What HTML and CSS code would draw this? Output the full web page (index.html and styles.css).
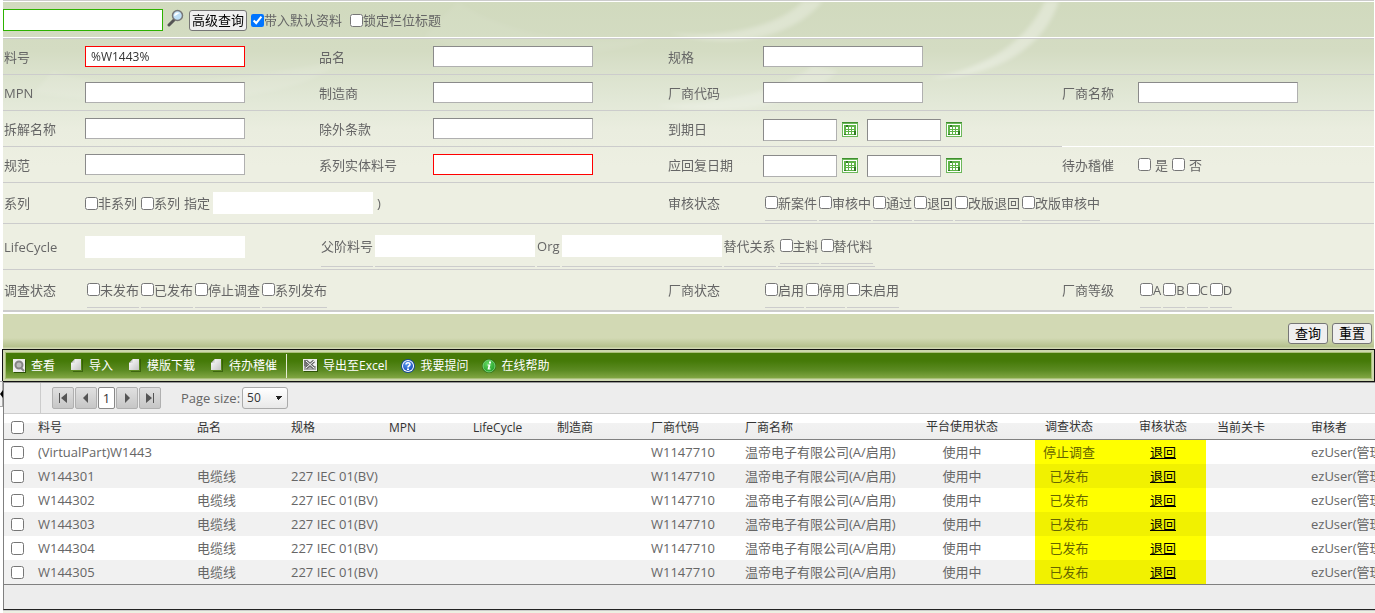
FILE: index.html
```
<!DOCTYPE html>
<html lang="zh-CN">
<head>
<meta charset="utf-8">
<title>料号查询</title>
<link rel="stylesheet" href="styles.css">
</head>
<body>
<svg class="defs" aria-hidden="true">
  <defs>
    <linearGradient id="paper" x1="0" y1="0" x2="1" y2="1"><stop offset="0" stop-color="#fff"/><stop offset="1" stop-color="#c4c4c4"/></linearGradient>
    <radialGradient id="blue" cx=".4" cy=".3" r=".8"><stop offset="0" stop-color="#5b9bf0"/><stop offset="1" stop-color="#1247b8"/></radialGradient>
    <radialGradient id="green" cx=".4" cy=".3" r=".8"><stop offset="0" stop-color="#63d862"/><stop offset="1" stop-color="#1b9a22"/></radialGradient>
    <filter id="soft"><feGaussianBlur stdDeviation="2"/></filter>
    <symbol id="cal" viewBox="0 0 16 15">
      <path fill="#6cb85a" d="M0 0h16v15H0z"/><path fill="#3f8f2f" d="M0 0h16v1H0z"/>
      <path fill="#fff" d="M1 2h14v12H1z"/><path fill="#5fb348" d="M2 3h12v10H2z"/>
      <path fill="#fff" d="M4 5h2v2H4zM7 5h2v2H7zM10 5h2v2h-2zM4 8h2v1H4zM7 8h2v1H7zM10 8h2v1h-2zM4 10h2v2H4zM7 10h2v2H7zM10 10h2v2h-2z"/>
      <path fill="#2f7a22" d="M4 3h2v2H4zM2 12h2v1H2zM12 9h2v4h-2z"/>
    </symbol>
    <symbol id="page" viewBox="0 0 12 14">
      <path fill="#2d5206" d="M5 1h7v13H2v-1h9V1z" opacity=".7"/>
      <path fill="url(#paper)" d="M4 1h6v11H0V5z"/><path fill="#9b9b9b" d="M4 1v4H0z"/><path fill="#ddd" d="M4 1v4H1z"/>
    </symbol>
  </defs>
</svg>

<form class="query">
  <svg class="swoosh" viewBox="0 0 1371 310" preserveAspectRatio="none" aria-hidden="true">
    <g filter="url(#soft)">
      <path d="M820 0C796 30 742 52 665 32C725 38 778 24 800 0z" opacity=".28"/>
      <path d="M1056 0C1043 42 1000 76 925 78C990 66 1026 36 1042 0z" opacity=".32"/>
      <path d="M835 70C800 104 730 118 650 104C720 104 785 88 810 64z" opacity=".2"/>
      <path d="M455 0C485 24 560 48 655 36C590 62 490 62 420 36z" opacity=".06"/>
      <path d="M50 70C100 92 260 78 340 58C300 100 160 112 30 92z" opacity=".1"/>
    </g>
  </svg>

  <div class="top">
    <input class="box green" type="text" aria-label="快速查询">
    <button class="glass" type="button" aria-label="查询">
      <svg width="18" height="18" viewBox="0 0 18 18"><path d="M7 11l-5 5" stroke="#555" stroke-width="3" stroke-linecap="round"/><circle cx="10.500" cy="6.500" r="5" fill="#bfe0f7" stroke="#777" stroke-width="1.500"/><path d="M7 7a4 4 0 0 1 6-3c-2 0-3 3-6 3z" fill="#fff"/></svg>
    </button>
    <button class="btn" type="button">高级查询</button>
    <label class="opt first"><input type="checkbox" checked>带入默认资料</label>
    <label class="opt"><input type="checkbox">锁定栏位标题</label>
  </div>

  <div class="row">
    <label class="cell" for="f1">料号</label><div class="cell"><input class="box red" id="f1" type="text" value="%W1443%"></div>
    <label class="cell" for="f2">品名</label><div class="cell"><input class="box" id="f2" type="text"></div>
    <label class="cell" for="f3">规格</label><div class="cell"><input class="box" id="f3" type="text"></div>
    <div class="cell"></div><div class="cell"></div>
  </div>
  <div class="row">
    <label class="cell" for="f4">MPN</label><div class="cell"><input class="box" id="f4" type="text"></div>
    <label class="cell" for="f5">制造商</label><div class="cell"><input class="box" id="f5" type="text"></div>
    <label class="cell" for="f6">厂商代码</label><div class="cell"><input class="box" id="f6" type="text"></div>
    <label class="cell" for="f7">厂商名称</label><div class="cell"><input class="box" id="f7" type="text"></div>
  </div>
  <div class="row">
    <label class="cell" for="f8">拆解名称</label><div class="cell"><input class="box" id="f8" type="text"></div>
    <label class="cell" for="f9">除外条款</label><div class="cell"><input class="box" id="f9" type="text"></div>
    <label class="cell" for="f10">到期日</label>
    <div class="cell dates"><input class="box" id="f10" type="text"><button class="cal" type="button" aria-label="选择日期"><svg width="16" height="15"><use href="#cal"/></svg></button><input class="box" type="text" aria-label="到期日止"><button class="cal" type="button" aria-label="选择日期"><svg width="16" height="15"><use href="#cal"/></svg></button></div>
    <div class="cell light"></div><div class="cell light"></div>
  </div>
  <div class="row">
    <label class="cell" for="f11">规范</label><div class="cell"><input class="box" id="f11" type="text"></div>
    <label class="cell" for="f12">系列实体料号</label><div class="cell"><input class="box red" id="f12" type="text"></div>
    <label class="cell" for="f13">应回复日期</label>
    <div class="cell dates"><input class="box" id="f13" type="text"><button class="cal" type="button" aria-label="选择日期"><svg width="16" height="15"><use href="#cal"/></svg></button><input class="box" type="text" aria-label="应回复日期止"><button class="cal" type="button" aria-label="选择日期"><svg width="16" height="15"><use href="#cal"/></svg></button></div>
    <span class="cell">待办稽催</span>
    <div class="cell loose"><label><input type="checkbox">是</label><label><input type="checkbox">否</label></div>
  </div>
  <div class="row series">
    <span class="cell">系列</span>
    <div class="cell mid wide3"><label class="opt"><input type="checkbox">非系列</label><label class="opt"><input type="checkbox">系列</label><label for="f14">指定</label><input class="box plain" id="f14" type="text"><span>)</span></div>
    <span class="cell">审核状态</span>
    <div class="cell wide3"><div class="opts">
      <label class="item"><input type="checkbox">新案件</label><label class="item"><input type="checkbox">审核中</label><label class="item"><input type="checkbox">通过</label><label class="item"><input type="checkbox">退回</label><label class="item"><input type="checkbox">改版退回</label><label class="item"><input type="checkbox">改版审核中</label>
    </div></div>
  </div>
  <div class="row life">
    <label class="cell" for="f15">LifeCycle</label><div class="cell"><input class="box plain" id="f15" type="text"></div>
    <div class="cell wide6"><div class="opts outer">
      <label class="item" for="f16">父阶料号</label><div class="item"><input class="box plain" id="f16" type="text"></div>
      <label class="item" for="f17">Org</label><div class="item"><input class="box plain" id="f17" type="text"></div>
      <span class="item">替代关系</span>
      <div class="item"><div class="opts"><label class="item"><input type="checkbox">主料</label><label class="item"><input type="checkbox">替代料</label></div></div>
    </div></div>
  </div>
  <div class="row last">
    <span class="cell">调查状态</span>
    <div class="cell wide3"><div class="opts">
      <label class="item"><input type="checkbox">未发布</label><label class="item"><input type="checkbox">已发布</label><label class="item"><input type="checkbox">停止调查</label><label class="item"><input type="checkbox">系列发布</label>
    </div></div>
    <span class="cell">厂商状态</span>
    <div class="cell"><div class="opts">
      <label class="item"><input type="checkbox">启用</label><label class="item"><input type="checkbox">停用</label><label class="item"><input type="checkbox">未启用</label>
    </div></div>
    <span class="cell">厂商等级</span>
    <div class="cell"><div class="opts">
      <label class="item"><input type="checkbox">A</label><label class="item"><input type="checkbox">B</label><label class="item"><input type="checkbox">C</label><label class="item"><input type="checkbox">D</label>
    </div></div>
  </div>
  <div class="actions"><button class="btn" type="button">查询</button><button class="btn" type="reset">重置</button></div>
</form>

<div class="toolbar">
  <div class="tools">
    <button type="button"><svg width="14" height="16" viewBox="0 0 14 16"><path fill="#2d5206" d="M1 2h12v13H1z"/><path fill="#eee" d="M0 1h12v13H0z"/><circle cx="6" cy="7" r="3.500" fill="#bbb" stroke="#858585" stroke-width="2"/><path d="M8 10l3 3" stroke="#858585" stroke-width="2"/></svg>查看</button>
    <button type="button"><svg width="14" height="16" viewBox="0 0 14 16"><use href="#page" width="12" height="14"/></svg>导入</button>
    <button type="button"><svg width="14" height="16" viewBox="0 0 14 16"><use href="#page" width="12" height="14"/></svg>模版下载</button>
    <button type="button"><svg width="14" height="16" viewBox="0 0 14 16"><use href="#page" width="12" height="14"/></svg>待办稽催</button>
  </div>
  <div class="tools second">
    <button type="button"><svg width="16" height="16" viewBox="0 0 16 16"><path fill="#2d5206" d="M1 2h14v12H1z"/><path fill="#eee" d="M0 1h14v12H0z"/><path fill="#aaa" d="M1 8h12v4H1z"/><path fill="#777" d="M1 2h3v6H1z"/><path d="M3 3l8 7M11 3l-8 7" stroke="#666" stroke-width="3"/><path d="M3 3l8 7M11 3l-8 7" stroke="#fff"/></svg>导出至Excel</button>
    <button type="button"><svg width="16" height="16" viewBox="0 0 16 16"><circle cx="7" cy="8" r="7" fill="#174a9c"/><circle cx="7" cy="8" r="6" fill="#fff"/><circle cx="7" cy="8" r="5" fill="url(#blue)"/><path d="M5 6.500c0-2.500 4-2.500 4 0C9 8 7 7.500 7 9.500" fill="none" stroke="#fff" stroke-width="1.500"/><path fill="#fff" d="M6 10.500h2v1.500H6z"/></svg>我要提问</button>
    <button type="button"><svg width="16" height="16" viewBox="0 0 16 16"><circle cx="7" cy="8" r="7" fill="#246b13"/><circle cx="7" cy="8" r="6" fill="url(#green)" stroke="#7fd47b"/><path fill="#fff" d="M7 3.500h2v2H7zM5.500 6.500h3l-1 4h1v1h-3l1-4h-1z"/></svg>在线帮助</button>
  </div>
</div>

<main class="grid">
  <div class="pager">
    <div class="pages">
      <button type="button" aria-label="第一页"><svg width="12" height="12" viewBox="0 0 12 12"><path d="M2 1h1v10H2zM10 1v10L4 6z"/></svg></button>
      <button type="button" aria-label="上一页"><svg width="12" height="12" viewBox="0 0 12 12"><path d="M8 1v10L3 6z"/></svg></button>
      <button class="now" type="button">1</button>
      <button type="button" aria-label="下一页"><svg width="12" height="12" viewBox="0 0 12 12"><path d="M4 1v10l5-5z"/></svg></button>
      <button type="button" aria-label="最后一页"><svg width="12" height="12" viewBox="0 0 12 12"><path d="M9 1h1v10H9zM2 1v10l6-5z"/></svg></button>
    </div>
    <label for="size">Page size:</label>
    <select id="size"><option>50</option></select>
  </div>
  <div class="scroll">
    <table>
      <colgroup><col class="w27"><col class="w159"><col class="w94"><col class="w98"><col class="w84"><col class="w84"><col class="w94"><col class="w94"><col class="w164"><col class="w120"><col class="w94"><col class="w94"><col class="w94"><col class="w120"></colgroup>
      <thead><tr><th><input type="checkbox" aria-label="全选"></th><th>料号</th><th>品名</th><th>规格</th><th>MPN</th><th>LifeCycle</th><th>制造商</th><th>厂商代码</th><th>厂商名称</th><th class="c">平台使用状态</th><th class="c">调查状态</th><th class="c">审核状态</th><th>当前关卡</th><th>审核者</th></tr></thead>
      <tbody>
        <tr><td><input type="checkbox" aria-label="选择"></td><td>(VirtualPart)W1443</td><td></td><td></td><td></td><td></td><td></td><td>W1147710</td><td>温帝电子有限公司(A/启用)</td><td class="c">使用中</td><td class="c">停止调查</td><td class="c"><a href="#">退回</a></td><td></td><td>ezUser(管理</td></tr>
        <tr><td><input type="checkbox" aria-label="选择"></td><td>W144301</td><td>电缆线</td><td>227 IEC 01(BV)</td><td></td><td></td><td></td><td>W1147710</td><td>温帝电子有限公司(A/启用)</td><td class="c">使用中</td><td class="c">已发布</td><td class="c"><a href="#">退回</a></td><td></td><td>ezUser(管理</td></tr>
        <tr><td><input type="checkbox" aria-label="选择"></td><td>W144302</td><td>电缆线</td><td>227 IEC 01(BV)</td><td></td><td></td><td></td><td>W1147710</td><td>温帝电子有限公司(A/启用)</td><td class="c">使用中</td><td class="c">已发布</td><td class="c"><a href="#">退回</a></td><td></td><td>ezUser(管理</td></tr>
        <tr><td><input type="checkbox" aria-label="选择"></td><td>W144303</td><td>电缆线</td><td>227 IEC 01(BV)</td><td></td><td></td><td></td><td>W1147710</td><td>温帝电子有限公司(A/启用)</td><td class="c">使用中</td><td class="c">已发布</td><td class="c"><a href="#">退回</a></td><td></td><td>ezUser(管理</td></tr>
        <tr><td><input type="checkbox" aria-label="选择"></td><td>W144304</td><td>电缆线</td><td>227 IEC 01(BV)</td><td></td><td></td><td></td><td>W1147710</td><td>温帝电子有限公司(A/启用)</td><td class="c">使用中</td><td class="c">已发布</td><td class="c"><a href="#">退回</a></td><td></td><td>ezUser(管理</td></tr>
        <tr><td><input type="checkbox" aria-label="选择"></td><td>W144305</td><td>电缆线</td><td>227 IEC 01(BV)</td><td></td><td></td><td></td><td>W1147710</td><td>温帝电子有限公司(A/启用)</td><td class="c">使用中</td><td class="c">已发布</td><td class="c"><a href="#">退回</a></td><td></td><td>ezUser(管理</td></tr>
      </tbody>
    </table>
    <div class="marker"></div>
  </div>
  <div class="foot"></div>
</main>
<div class="under"></div>
<button class="splitter" type="button" aria-label="展开"></button>
</body>
</html>
```
FILE: styles.css
```
* { box-sizing: border-box; }
body {
  margin: 0;
  position: relative;
  padding-left: 3px;
  overflow: hidden;
  background: #fff;
  color: #666;
  font: 13px/18px "Open Sans", "Noto Sans CJK SC", sans-serif;
}
button, input, select { font: inherit; margin: 0; }
input[type="checkbox"] { width: 13px; height: 13px; margin: 0; flex: none; }
.defs { position: absolute; width: 0; height: 0; }

.query {
  position: relative;
  margin-right: 1px;
  border-top: 1px solid #ccc;
  background: linear-gradient(#d1dabe 2px, #d4dcc3 50px, #dbe2cd 72px, #e2e8d7 100px, #eaeddf 128px, #edefe2 165px);
}
.swoosh { position: absolute; left: 0; top: 0; width: 100%; height: 310px; fill: #fff; }
.top, .row, .actions { position: relative; }
.top {
  display: flex;
  align-items: center;
  height: 38px;
  border-top: 1px solid #fff;
  border-bottom: 1px solid #ccc;
  box-shadow: inset 0 -1px #fff;
}
.box {
  width: 160px;
  height: 21px;
  padding: 0 5px;
  border: 1px solid #b0b0b0;
  border-top-color: #8a8a8a;
  border-left-color: #8a8a8a;
  background: #fff;
  color: #333;
  font-size: 12px;
}
.box.red { border-color: #f00; }
.box.green { height: 22px; border-color: #2db200; }
.box.plain { height: 22px; border-color: #fff; }
.glass { width: 18px; height: 24px; margin: 0 4px; padding: 0 0 4px; border: 0; background: none; }
.glass svg { display: block; }
.btn {
  padding: 0 1px;
  border: 1px solid #767676;
  border-radius: 3px;
  background: #efefef;
  color: #000;
  line-height: 19px;
}
.top .btn { padding: 0 2px; }
.opt { display: flex; align-items: center; margin-right: 4px; }
.top .opt { margin-right: 8px; }
.top .first { margin-left: 4px; }

.row {
  display: grid;
  grid-template-columns: 82px minmax(0, 234fr) 114px minmax(0, 235fr) 95px minmax(0, 299fr) 76px minmax(0, 236fr);
  min-height: 36px;
}
.cell {
  display: flex;
  align-items: center;
  border-bottom: 1px solid #ccc;
  white-space: nowrap;
}
.cell:first-child { padding-left: 1px; }
.cell.light { border-color: #fff; }
.wide3 { grid-column: span 3; }
.wide6 { grid-column: span 6; }
.dates { padding-top: 2px; }
.dates .box { width: 74px; height: 22px; }
.cal { width: 16px; height: 15px; margin: 0 9px 0 5px; padding: 0; border: 0; background: none; }
.cal svg { display: block; }
.loose label { display: flex; align-items: center; gap: 4px; margin-right: 4px; }
.series { min-height: 41px; }
.series .plain { margin: 0 4px 0 3px; }
.life { min-height: 46px; }
.last { min-height: 42px; }
.last .cell { border-bottom-width: 2px; }
.opts { display: flex; gap: 2px; padding: 0 2px; }
.item {
  display: flex;
  align-items: center;
  height: 35px;
  border-bottom: 1px solid #ccc;
}
.outer > .item { height: 41px; }

.actions {
  display: flex;
  justify-content: flex-end;
  align-items: center;
  gap: 4px;
  height: 37px;
  padding: 3px 2px 0 0;
  border-top: 2px solid #fff;
  background: linear-gradient(#d2d9b4 24px, #b4c18c 33px, #d2d9b4 34px);
}
.actions .btn { padding: 0 6px; }

.toolbar {
  display: flex;
  align-items: center;
  height: 33px;
  margin-left: -1px;
  padding: 0 10px;
  border: 1px solid #111;
  box-shadow: inset 0 0 0 2px #cdd8ae, inset 0 0 0 3px #a9c078;
  background: linear-gradient(#457a08 35%, #5b8a22 65%, #8fb050);
}
.tools { display: flex; align-items: center; gap: 16px; height: 24px; padding-right: 9px; }
.second { padding-left: 16px; border-left: 1px solid #e4ebd4; gap: 13px; }
.tools button {
  display: flex;
  align-items: center;
  gap: 4px;
  padding: 0;
  border: 0;
  background: none;
  color: #fff;
  font-size: 12px;
  white-space: nowrap;
}
.tools svg { flex: none; }

.grid { border-left: 1px solid #808080; border-bottom: 1px solid #222; }
.pager {
  display: flex;
  align-items: center;
  height: 32px;
  border-top: 1px solid #999;
  border-bottom: 1px solid #ccc;
  background: #ededed;
}
.pages { display: flex; align-items: center; gap: 1px; height: 100%; margin: 0 20px 0 36px; padding-left: 11px; border-left: 1px solid #ccc; }
.pages button {
  display: flex;
  align-items: center;
  justify-content: center;
  width: 22px;
  height: 22px;
  padding: 0;
  border: 1px solid #b0b0b0;
  border-radius: 2px;
  background: linear-gradient(#e0e0e0, #c6c6c6);
}
.pages svg { fill: #555; }
.pages .now { width: 17px; border-color: #888; background: #fff; color: #333; }
.pager select {
  width: 46px;
  height: 22px;
  margin-left: 2px;
  padding: 0 4px;
  appearance: none;
  border: 1px solid #aaa;
  border-radius: 3px;
  background:
    linear-gradient(45deg, transparent 50%, #222 50%) 32px 8px / 4px 4px no-repeat,
    linear-gradient(-45deg, transparent 50%, #222 50%) 36px 8px / 4px 4px no-repeat,
    linear-gradient(#fff, #e8e8e8);
  color: #333;
  font-size: 12px;
}
.scroll { position: relative; overflow: hidden; }
table { width: 1420px; table-layout: fixed; border-collapse: separate; border-spacing: 0; }
th, td { height: 24px; padding: 0 0 0 7px; text-align: left; font-weight: 400; white-space: nowrap; }
.c { padding: 0; text-align: center; }
th {
  height: 26px;
  padding-top: 2px;
  border-bottom: 1px solid #808080;
  background: linear-gradient(#fff 9px, #f2f2f2 9px, #ededed);
  color: #333;
  font-size: 12px;
}
td { background: #fff; }
tr:nth-child(even) td { background: #f1f1f1; }
td input, th input { display: block; }
td a { color: #000; }
.w27 { width: 27px; }
.w84 { width: 84px; }
.w94 { width: 94px; }
.w98 { width: 98px; }
.w120 { width: 120px; }
.w159 { width: 159px; }
.w164 { width: 164px; }
.marker {
  position: absolute;
  left: 1031px;
  top: 26px;
  bottom: 0;
  width: 171px;
  background: #ff0;
  mix-blend-mode: multiply;
  pointer-events: none;
}
.foot { height: 25px; border-top: 1px solid #808080; background: #ededed; }
.under { height: 3px; border-top: 1px solid #ccc; background: #edefe2; }
.splitter {
  position: absolute;
  left: 0;
  top: 381px;
  width: 3px;
  height: 26px;
  padding: 0;
  border: 1px solid #aaa;
  border-left: 0;
  background: #f4f4f4;
}
.splitter::before {
  content: "";
  display: block;
  width: 0;
  border: 4px solid transparent;
  border-left: 0;
  border-right: 3px solid #000;
}
```
